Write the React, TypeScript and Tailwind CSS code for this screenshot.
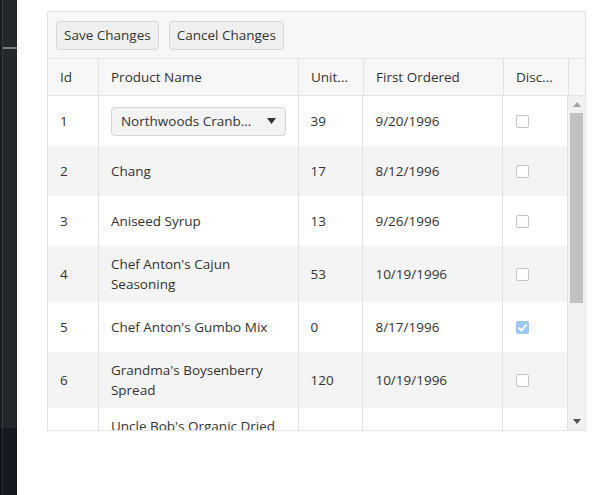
import React from 'react';

interface Product {
  id: number;
  name: string;
  units: string;
  firstOrdered: string;
  discontinued: boolean;
  tall?: boolean;
}

const products: Product[] = [
  { id: 1, name: 'Northwoods Cranb...', units: '39', firstOrdered: '9/20/1996', discontinued: false },
  { id: 2, name: 'Chang', units: '17', firstOrdered: '8/12/1996', discontinued: false },
  { id: 3, name: 'Aniseed Syrup', units: '13', firstOrdered: '9/26/1996', discontinued: false },
  { id: 4, name: "Chef Anton's Cajun Seasoning", units: '53', firstOrdered: '10/19/1996', discontinued: false, tall: true },
  { id: 5, name: "Chef Anton's Gumbo Mix", units: '0', firstOrdered: '8/17/1996', discontinued: true },
  { id: 6, name: "Grandma's Boysenberry Spread", units: '120', firstOrdered: '10/19/1996', discontinued: false, tall: true },
  { id: 7, name: "Uncle Bob's Organic Dried Pears", units: '15', firstOrdered: '7/22/1996', discontinued: false, tall: true },
];

function Checkbox({ checked }: { checked: boolean }) {
  if (checked) {
    return (
      <span className="w-[13px] h-[13px] rounded-[2px] bg-[#99c8fb] flex items-center justify-center">
        <svg width="11" height="11" viewBox="0 0 11 11">
          <path d="M1.5 5.8 L4.3 8.4 L9.5 2.6" fill="none" stroke="white" strokeWidth="2" />
        </svg>
      </span>
    );
  }
  return <span className="w-[13px] h-[13px] rounded-[2px] border border-[#c4c4c4] bg-white block" />;
}

function ProductCell({ product }: { product: Product }) {
  if (product.id === 1) {
    return (
      <div className="w-[175px] h-[29px] rounded border border-[#d4d4d4] bg-[#f3f3f3] flex items-center justify-between pl-[9px] pr-[9px]">
        <span>{product.name}</span>
        <svg width="9" height="6" viewBox="0 0 9 6">
          <path d="M0 0 L9 0 L4.5 6 Z" fill="#333" />
        </svg>
      </div>
    );
  }
  return <span className="leading-[20px]">{product.name}</span>;
}

function GridRow({ product, index }: { product: Product; index: number }) {
  const rowBg = index % 2 === 1 ? 'bg-[#f4f4f4]' : 'bg-white';
  const height = product.tall ? 'h-[56px]' : 'h-[50px]';
  return (
    <div className={`flex shrink-0 ${height} ${rowBg}`}>
      <div className="w-[51px] border-r border-[#e2e2e2] pl-[12px] flex items-center">{product.id}</div>
      <div className="w-[200px] border-r border-[#e2e2e2] pl-[12px] pr-[10px] flex items-center">
        <ProductCell product={product} />
      </div>
      <div className="w-[65px] border-r border-[#e2e2e2] pl-[12px] flex items-center">{product.units}</div>
      <div className="w-[140px] border-r border-[#e2e2e2] pl-[12px] flex items-center">{product.firstOrdered}</div>
      <div className="w-[64px] pl-[13px] flex items-center">
        <Checkbox checked={product.discontinued} />
      </div>
    </div>
  );
}

function Scrollbar() {
  return (
    <div className="w-[17px] bg-[#f1f1f1] flex flex-col items-center">
      <div className="h-[17px] flex items-center justify-center">
        <svg width="8" height="5" viewBox="0 0 8 5">
          <path d="M0 5 L4 0 L8 5 Z" fill="#a3a3a3" />
        </svg>
      </div>
      <div className="w-[13px] h-[190px] bg-[#c1c1c1]" />
      <div className="flex-1" />
      <div className="h-[17px] flex items-center justify-center">
        <svg width="8" height="5" viewBox="0 0 8 5">
          <path d="M0 0 L8 0 L4 5 Z" fill="#505050" />
        </svg>
      </div>
    </div>
  );
}

export default function App() {
  return (
    <div className="flex w-[598px] h-[495px] bg-white text-[13.5px] text-[#333] font-['Open_Sans','Segoe_UI',sans-serif]">
      {/* Editor side rail */}
      <div className="w-[17px] shrink-0 flex flex-col bg-[#24272c]">
        <div className="flex-1 flex">
          <div className="w-[2px] bg-[#1b1d21]" />
          <div className="w-[1px] bg-[#3a3d42]" />
          <div className="flex-1 pt-[47px]">
            <div className="h-[2px] bg-[#7b7d80]" />
          </div>
        </div>
        <div className="h-[67px] flex">
          <div className="w-[2px] bg-[#101216]" />
          <div className="w-[1px] bg-[#2a2d33]" />
          <div className="flex-1 bg-[#161920]" />
        </div>
      </div>

      <div className="flex-1 pl-[30px] pt-[11px]">
        <div className="w-[539px] h-[420px] border border-[#e4e4e4] flex flex-col overflow-hidden">
          {/* Toolbar */}
          <div className="h-[47px] shrink-0 bg-[#f7f7f7] border-b border-[#e4e4e4] flex items-center gap-[10px] pl-[8px]">
            <button className="h-[29px] px-[7px] rounded border border-[#d6d6d6] bg-[#efefef] text-[#333]">Save Changes</button>
            <button className="h-[29px] px-[7px] rounded border border-[#d6d6d6] bg-[#efefef] text-[#333]">Cancel Changes</button>
          </div>

          {/* Header */}
          <div className="h-[37px] shrink-0 flex bg-[#f7f7f7] border-b border-[#e4e4e4]">
            <div className="w-[51px] border-r border-[#e2e2e2] pl-[12px] flex items-center">Id</div>
            <div className="w-[200px] border-r border-[#e2e2e2] pl-[12px] flex items-center">Product Name</div>
            <div className="w-[65px] border-r border-[#e2e2e2] pl-[12px] flex items-center">Unit...</div>
            <div className="w-[140px] border-r border-[#e2e2e2] pl-[12px] flex items-center">First Ordered</div>
            <div className="w-[65px] border-r border-[#e2e2e2] pl-[12px] flex items-center">Disc...</div>
            <div className="flex-1" />
          </div>

          {/* Rows */}
          <div className="flex-1 min-h-0 flex">
            <div className="flex-1 overflow-hidden flex flex-col">
              {products.map((p, i) => (
                <GridRow key={p.id} product={p} index={i} />
              ))}
            </div>
            <div className="w-[1px] bg-[#e2e2e2]" />
            <Scrollbar />
          </div>
        </div>
      </div>
    </div>
  );
}
